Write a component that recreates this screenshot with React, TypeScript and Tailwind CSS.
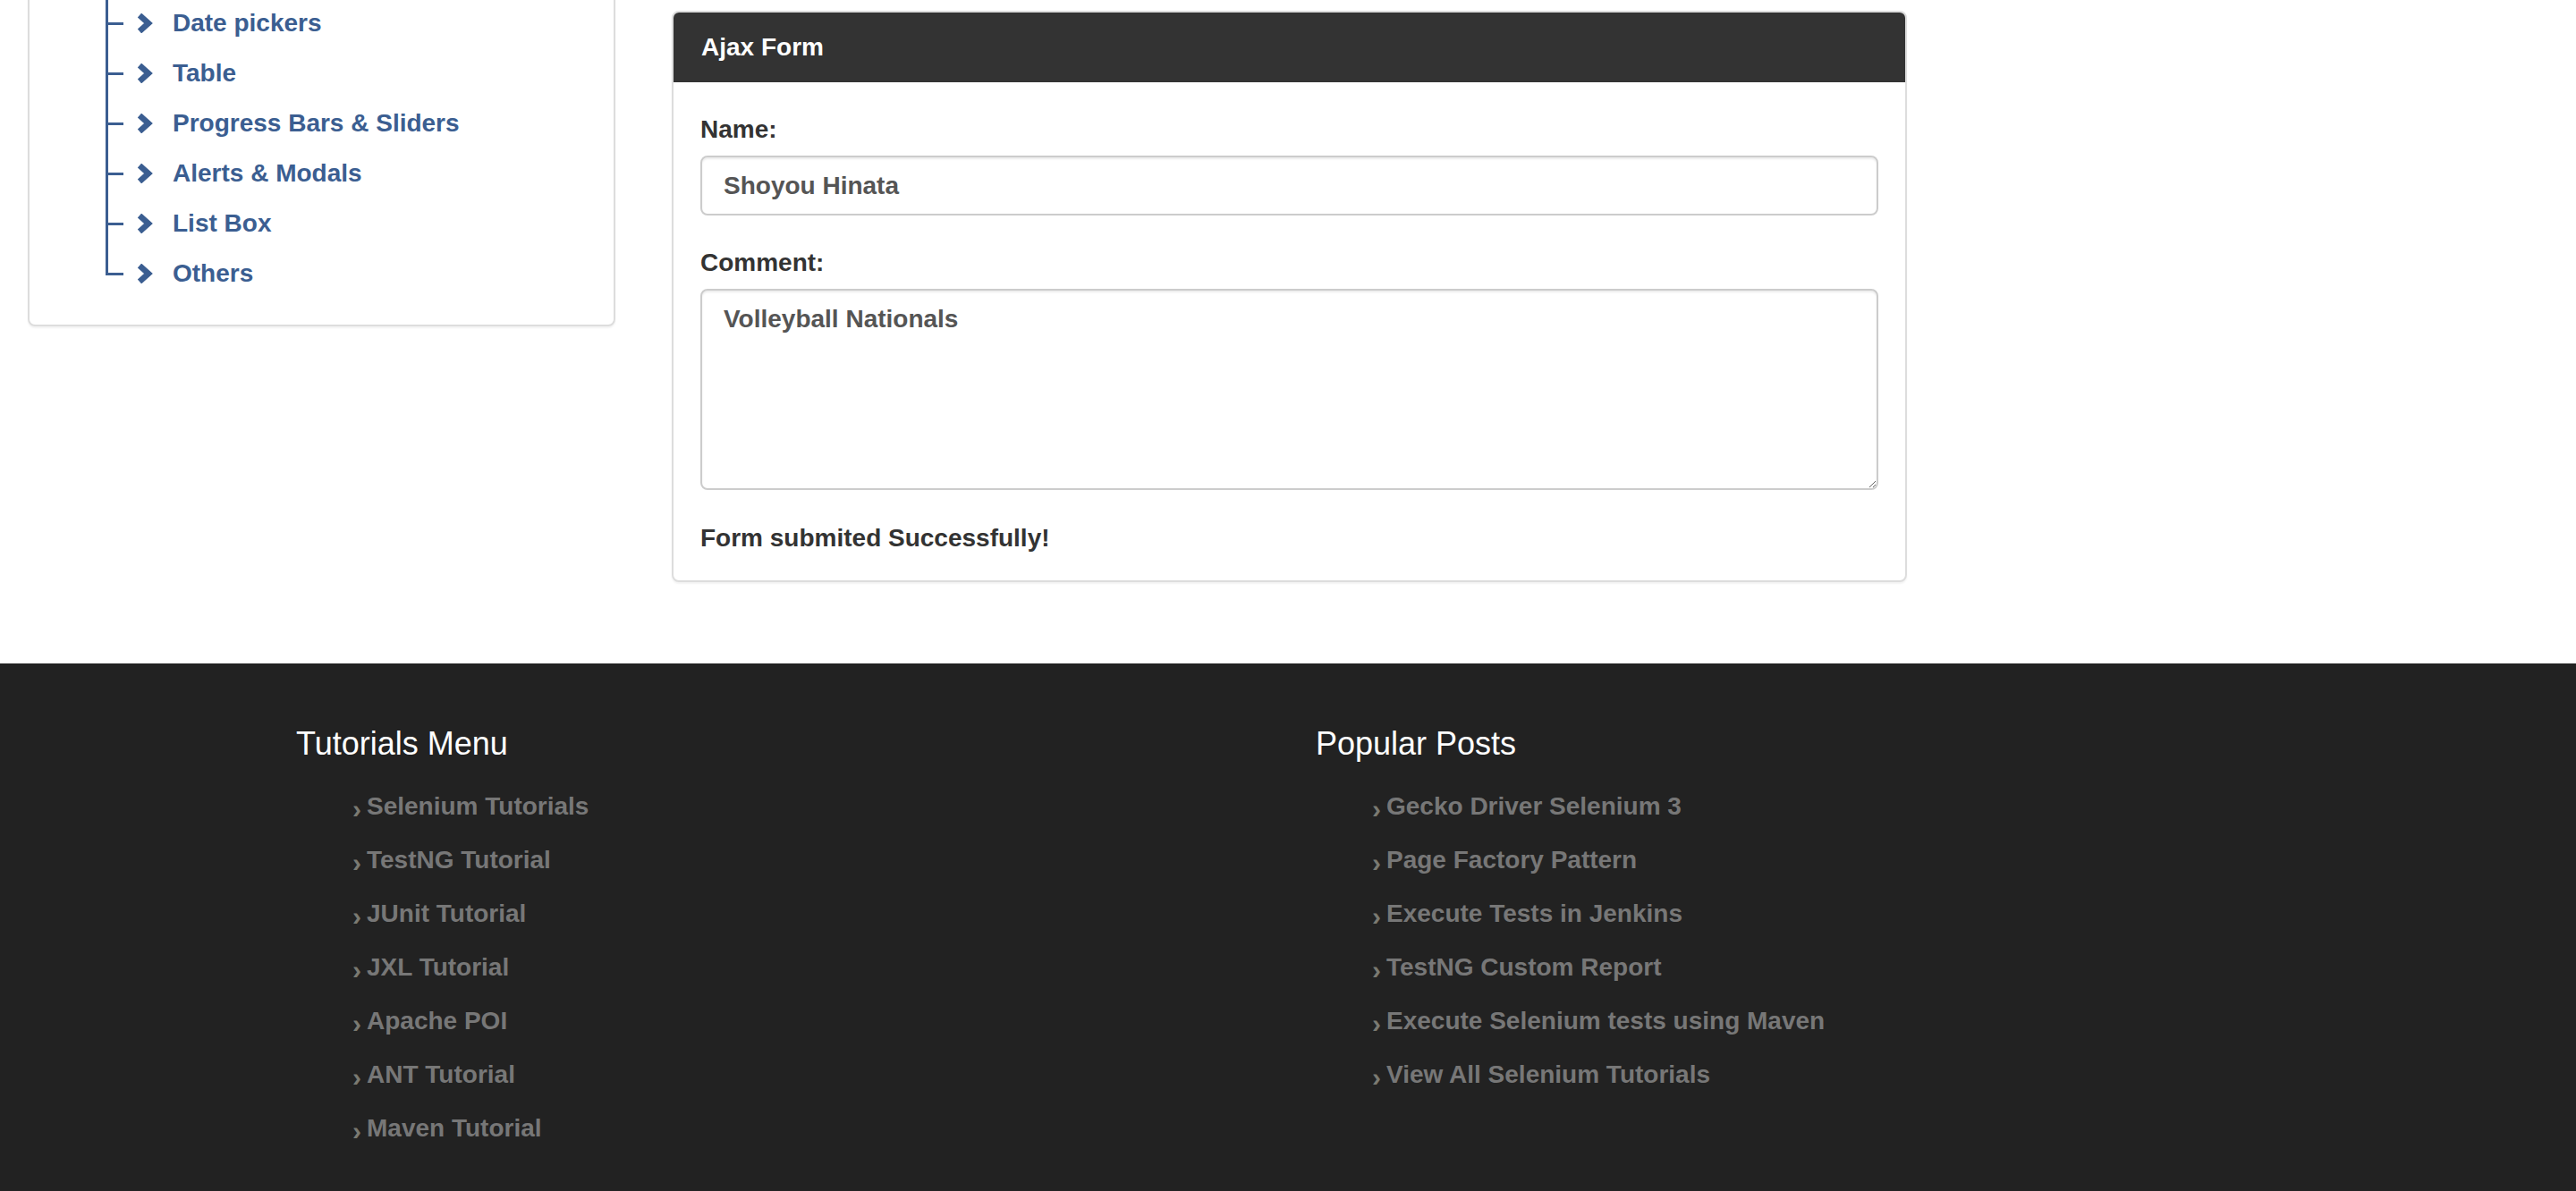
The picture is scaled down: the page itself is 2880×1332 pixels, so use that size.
import { useState } from 'react';

const treeItems = ['Date pickers', 'Table', 'Progress Bars & Sliders', 'Alerts & Modals', 'List Box', 'Others'];

const tutorials = [
  'Selenium Tutorials',
  'TestNG Tutorial',
  'JUnit Tutorial',
  'JXL Tutorial',
  'Apache POI',
  'ANT Tutorial',
  'Maven Tutorial',
];

const posts = [
  'Gecko Driver Selenium 3',
  'Page Factory Pattern',
  'Execute Tests in Jenkins',
  'TestNG Custom Report',
  'Execute Selenium tests using Maven',
  'View All Selenium Tutorials',
];

function Chevron() {
  return (
    <svg width="18" height="22" viewBox="0 0 18 22" className="shrink-0">
      <polyline points="3,2 13,11 3,20" fill="none" stroke="#3b5e91" strokeWidth="6.5" strokeLinejoin="miter" />
    </svg>
  );
}

export default function App() {
  const [name, setName] = useState('Shoyou Hinata');
  const [comment, setComment] = useState('Volleyball Nationals');

  return (
    <div className="w-full bg-white font-['Liberation_Sans',Arial,sans-serif]">
      <div className="flex h-[742px] items-start overflow-hidden">
        {/* sidebar tree */}
        <div className="ml-[31px] mt-[-58px] w-[657px] rounded-[8px] border-2 border-[#ddd] bg-white pb-[29px] shadow-[0_2px_2px_rgba(0,0,0,0.05)]">
          <div className="relative h-[54px]">
            <span className="absolute left-[85px] top-0 bottom-0 w-[3px] bg-[#3b5e91]" />
          </div>
          {treeItems.map((item, i) => (
            <div key={item} className="relative flex h-[56px] items-center gap-[22px] pl-[120px]">
              <span className={`absolute left-[85px] top-0 w-[3px] bg-[#3b5e91] ${i === treeItems.length - 1 ? 'h-[30px]' : 'bottom-0'}`} />
              <span className="absolute left-[85px] top-[27px] h-[3px] w-[20px] bg-[#3b5e91]" />
              <Chevron />
              <a className="text-[28px] font-bold leading-[40px] text-[#3b5e91]">{item}</a>
            </div>
          ))}
        </div>

        {/* ajax form panel */}
        <div className="ml-[63px] mt-[12px] w-[1381px] rounded-[8px] border-2 border-[#ddd] bg-white shadow-[0_2px_2px_rgba(0,0,0,0.05)]">
          <div className="flex h-[78px] items-center rounded-t-[6px] bg-[#333] px-[31px]">
            <h3 className="text-[28px] font-bold text-white">Ajax Form</h3>
          </div>
          <div className="px-[30px] pt-[33px] pb-[27px] text-[#333]">
            <label className="mb-[9px] block text-[28px] font-bold leading-[40px]">Name:</label>
            <input
              value={name}
              onChange={(e) => setName(e.target.value)}
              className="block h-[67px] w-full rounded-[8px] border-2 border-[#ccc] px-[24px] text-[28px] font-bold text-[#555] shadow-[inset_0_2px_2px_rgba(0,0,0,0.075)] outline-none"
            />
            <label className="mt-[33px] mb-[9px] block text-[28px] font-bold leading-[40px]">Comment:</label>
            <textarea
              value={comment}
              onChange={(e) => setComment(e.target.value)}
              className="block h-[225px] w-full rounded-[8px] border-2 border-[#ccc] px-[24px] py-[12px] text-[28px] font-bold leading-[40px] text-[#555] shadow-[inset_0_2px_2px_rgba(0,0,0,0.075)] outline-none"
            />
            <p className="mt-[34px] text-[28px] font-bold leading-[40px]">Form submited Successfully!</p>
          </div>
        </div>
      </div>

      {/* footer */}
      <footer className="flex h-[590px] bg-[#222] pl-[331px] pt-[70px]">
        <div className="w-[1140px]">
          <h3 className="text-[36px] leading-[40px] text-white">Tutorials Menu</h3>
          <ul className="mt-[20px]">
            {tutorials.map((t) => (
              <li key={t} className="flex h-[60px] items-center pl-[63px] text-[28px] font-bold text-[#777]">
                <span className="mt-[4px] w-[16px] text-[30px] font-bold text-[#7a7a72]">›</span>
                {t}
              </li>
            ))}
          </ul>
        </div>
        <div>
          <h3 className="text-[36px] leading-[40px] text-white">Popular Posts</h3>
          <ul className="mt-[20px]">
            {posts.map((p) => (
              <li key={p} className="flex h-[60px] items-center pl-[63px] text-[28px] font-bold text-[#777]">
                <span className="mt-[4px] w-[16px] text-[30px] font-bold text-[#7a7a72]">›</span>
                {p}
              </li>
            ))}
          </ul>
        </div>
      </footer>
    </div>
  );
}
